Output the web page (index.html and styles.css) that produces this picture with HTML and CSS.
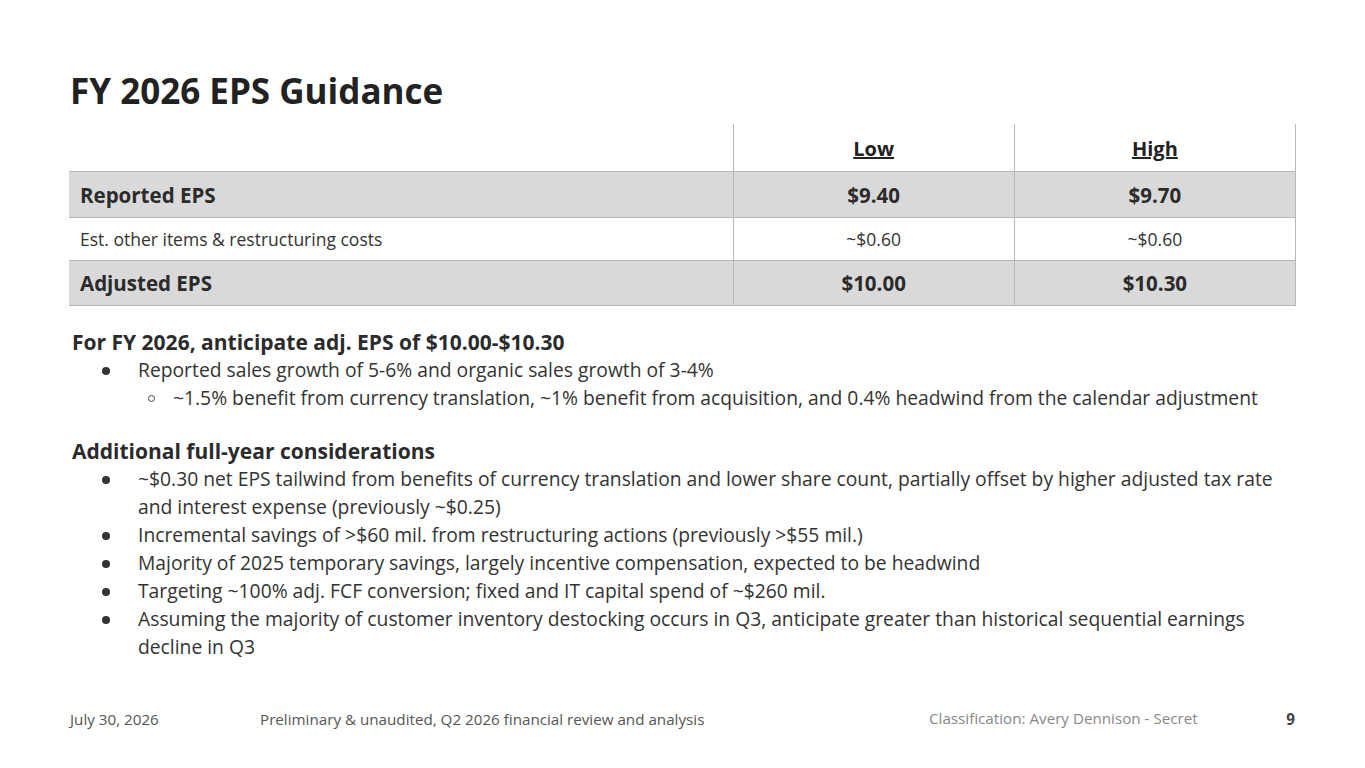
FILE: index.html
```html
<!DOCTYPE html>
<html>
<head>
<meta charset="utf-8">
<link rel="stylesheet" href="styles.css">
</head>
<body>
<div class="slide">
  <h1 class="title">FY 2026 EPS Guidance</h1>
  <table class="eps">
    <tr class="head">
      <td class="label"></td>
      <td class="val"><u>Low</u></td>
      <td class="val last"><u>High</u></td>
    </tr>
    <tr class="shade big r1">
      <td class="label">Reported EPS</td>
      <td class="val">$9.40</td>
      <td class="val last">$9.70</td>
    </tr>
    <tr class="small">
      <td class="label">Est. other items &amp; restructuring costs</td>
      <td class="val">~$0.60</td>
      <td class="val last">~$0.60</td>
    </tr>
    <tr class="shade big r3">
      <td class="label">Adjusted EPS</td>
      <td class="val">$10.00</td>
      <td class="val last">$10.30</td>
    </tr>
  </table>
  <div class="body">
    <p class="heading">For FY 2026, anticipate adj. EPS of $10.00-$10.30</p>
    <ul class="l1">
      <li>Reported sales growth of 5-6% and organic sales growth of 3-4%
        <ul class="l2">
          <li>~1.5% benefit from currency translation, ~1% benefit from acquisition, and 0.4% headwind from the calendar adjustment</li>
        </ul>
      </li>
    </ul>
    <p class="spacer"></p>
    <p class="heading">Additional full-year considerations</p>
    <ul class="l1">
      <li>~$0.30 net EPS tailwind from benefits of currency translation and lower share count, partially offset by higher adjusted tax rate and interest expense (previously ~$0.25)</li>
      <li>Incremental savings of &gt;$60 mil. from restructuring actions (previously &gt;$55 mil.)</li>
      <li>Majority of 2025 temporary savings, largely incentive compensation, expected to be headwind</li>
      <li>Targeting ~100% adj. FCF conversion; fixed and IT capital spend of ~$260 mil.</li>
      <li>Assuming the majority of customer inventory destocking occurs in Q3, anticipate greater than historical sequential earnings decline in Q3</li>
    </ul>
  </div>
  <div class="footer">
    <span class="date">July 30, 2026</span>
    <span class="desc">Preliminary &amp; unaudited, Q2 2026 financial review and analysis</span>
    <span class="class">Classification: Avery Dennison - Secret</span>
    <span class="page">9</span>
  </div>
</div>
</body>
</html>
```

FILE: styles.css
```css
html, body {
  margin: 0;
  padding: 0;
  background: #ffffff;
}
body {
  font-family: "Open Sans", "Lato", sans-serif;
  color: #333333;
}
.slide {
  width: 1365px;
  height: 768px;
  position: relative;
  box-sizing: border-box;
  padding: 0 69px;
  display: flex;
  flex-direction: column;
}
.title {
  margin: 71px 0 0 1px;
  font-size: 35px;
  line-height: 40px;
  font-weight: 700;
  color: #222222;
  height: 53px;
}
.eps {
  width: 1227px;
  border-collapse: collapse;
  table-layout: fixed;
}
.eps td {
  padding: 0;
  border: 1px solid #b7b7b7;
}
.eps td.label {
  width: 652px;
  padding-left: 11px;
  border-left: none;
}
.eps td.val {
  width: 280px;
  text-align: center;
}
.eps tr.head td {
  border-top: none;
  height: 45px;
  font-size: 20px;
  font-weight: 700;
  color: #222;
  padding-top: 2px;
}
.eps tr.head td.label {
  border-right: 1px solid #b7b7b7;
}
.eps tr.shade td {
  background: #d9d9d9;
}
.eps tr.big td {
  font-size: 20.5px;
  font-weight: 700;
  color: #2b2b2b;
}
.eps tr.r1 td {
  height: 45px;
}
.eps tr.r3 td {
  height: 44px;
}
.eps tr.small td {
  height: 42px;
  font-size: 17.5px;
  color: #333;
}
.body {
  margin-top: 22px;
  padding-left: 3px;
  font-size: 19.3px;
  line-height: 28px;
}
.body p {
  margin: 0;
}
.heading {
  font-weight: 700;
  font-size: 21px;
  color: #2b2b2b;
}
.spacer {
  height: 25px;
}
ul {
  margin: 0;
  padding: 0;
  list-style: none;
}
.l1 > li {
  position: relative;
  padding-left: 66px;
}
.l1 > li::before {
  content: "";
  position: absolute;
  left: 30px;
  top: 11px;
  width: 8px;
  height: 8px;
  border-radius: 50%;
  background: #333;
}
.l2 > li {
  position: relative;
  padding-left: 35px;
}
.l2 > li::before {
  content: "";
  position: absolute;
  left: 10px;
  top: 11px;
  width: 5px;
  height: 5px;
  border-radius: 50%;
  border: 1px solid #444;
}
.footer {
  margin-top: auto;
  margin-bottom: 39px;
  display: flex;
  align-items: baseline;
  font-size: 15.2px;
  color: #555;
  padding-left: 1px;
}
.date {
  width: 190px;
}
.desc {
  width: 669px;
}
.class {
  color: #888;
  position: relative;
  top: -1px;
}
.page {
  margin-left: auto;
  font-weight: 700;
  color: #444;
  padding-right: 1px;
}
```
